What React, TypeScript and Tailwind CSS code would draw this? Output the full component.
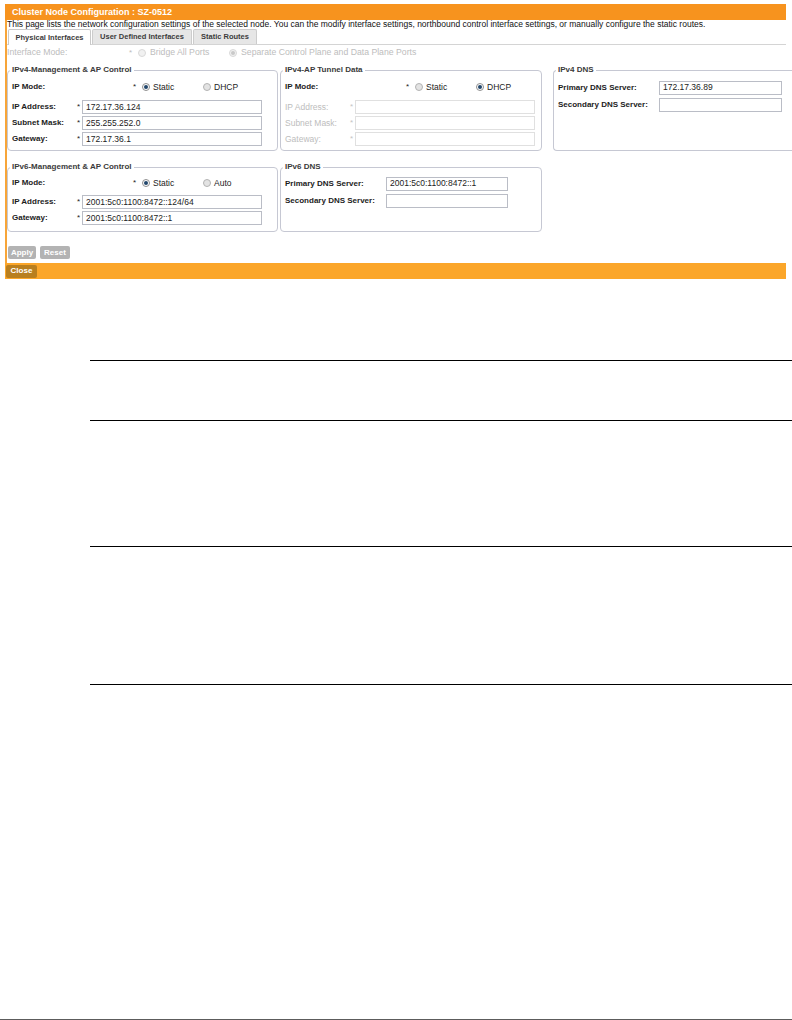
type RadioProps = { checked?: boolean; disabled?: boolean }

function Radio({ checked, disabled }: RadioProps) {
  const ring = disabled
    ? 'border-[#d9d9d9] bg-[#f1f1f1]'
    : checked
      ? 'border-[#8f8f8f] bg-white'
      : 'border-[#b3b3b3] bg-[#e3e3e3]'
  const dot = disabled ? 'bg-[#c9c9c9]' : 'bg-[#22466b]'
  return (
    <span className={`flex h-[8px] w-[8px] shrink-0 items-center justify-center rounded-full border ${ring}`}>
      {checked && <span className={`h-[4px] w-[4px] rounded-full ${dot}`} />}
    </span>
  )
}

function Field({ value, disabled, width }: { value?: string; disabled?: boolean; width: string }) {
  return (
    <div
      className={`flex h-[14px] items-center whitespace-nowrap border bg-white pl-[3px] text-[8.5px] leading-none text-[#222] ${width} ${
        disabled ? 'border-[#e0e0e0]' : 'border-[#babdc6]'
      }`}
    >
      {value}
    </div>
  )
}

// legend sits on the top border, like a fieldset
function Box({ title, className, children }: { title: string; className: string; children: React.ReactNode }) {
  return (
    <div className={`shrink-0 rounded-[4px] border border-[#c6c8d3] pl-[4px] ${className}`}>
      <div className="-mt-[6px] -ml-[2px] h-[10px] w-fit whitespace-nowrap bg-white px-[2px] text-[8px] font-bold leading-[10px] text-[#3a3a3a]">
        {title}
      </div>
      {children}
    </div>
  )
}

function ModeRow({ a, b, second }: { a: string; b: string; second?: boolean }) {
  return (
    <div className="flex h-[16px] items-center whitespace-nowrap">
      <span className="w-[121px] text-[8px] font-bold">IP Mode:</span>
      <span className="w-[9px] text-[8px]">*</span>
      <span className="flex w-[61px] items-center gap-[3px] text-[8.5px]">
        <Radio checked={!second} />
        {a}
      </span>
      <span className="flex items-center gap-[3px] text-[8.5px]">
        <Radio checked={second} />
        {b}
      </span>
    </div>
  )
}

function InputRow({ label, value, disabled }: { label: string; value?: string; disabled?: boolean }) {
  return (
    <div className="flex h-[16px] items-center whitespace-nowrap">
      <span className={`w-[65px] ${disabled ? 'text-[8.5px] text-[#bdbdbd]' : 'text-[8px] font-bold'}`}>{label}</span>
      <span className={`w-[5px] text-[8px] ${disabled ? 'text-[#c4c4c4]' : ''}`}>*</span>
      <Field value={value} disabled={disabled} width="w-[180px]" />
    </div>
  )
}

function DnsRow({ label, value, labelW, inputW }: { label: string; value?: string; labelW: string; inputW: string }) {
  return (
    <div className="flex h-[17px] items-center whitespace-nowrap">
      <span className={`text-[8px] font-bold ${labelW}`}>{label}</span>
      <Field value={value} width={inputW} />
    </div>
  )
}

export default function App() {
  return (
    <div className="flex h-[1020px] w-[792px] flex-col overflow-hidden bg-white font-['Liberation_Sans',Arial,sans-serif] text-[#1c1c1c]">
      <div className="pt-[4px]">
        <div className="ml-[5px] w-[781px]">
          <div className="flex h-[16px] items-center bg-[#f7931e] pl-[7px] text-[9px] font-bold leading-none text-white">
            Cluster Node Configuration : SZ-0512
          </div>

          <div className="border-l-2 border-[#f7a539] pb-[4px]">
            <p className="h-[9px] whitespace-nowrap text-[8.5px] leading-[9px] text-[#111]">
              This page lists the network configuration settings of the selected node. You can the modify interface settings, northbound control interface settings, or manually configure the static routes.
            </p>

            {/* tabs */}
            <div className="flex h-[16px] items-end gap-[1px] whitespace-nowrap border-b border-[#d4d4d4] pl-[1px] text-[7.5px] font-bold text-[#3b3b3b]">
              <div className="-mb-px flex h-[16px] w-[83px] items-center justify-center rounded-t-[2px] border border-b-0 border-[#c9c9c9] bg-white">
                Physical Interfaces
              </div>
              <div className="flex h-[15px] w-[100px] items-center justify-center rounded-t-[2px] border border-b-0 border-[#cccccc] bg-[#e6e6e6]">
                User Defined Interfaces
              </div>
              <div className="flex h-[15px] w-[64px] items-center justify-center rounded-t-[2px] border border-b-0 border-[#cccccc] bg-[#e6e6e6]">
                Static Routes
              </div>
            </div>

            <div className="flex h-[16px] items-center whitespace-nowrap text-[8.7px] text-[#bdbdbd]">
              <span className="w-[122px]">Interface Mode:</span>
              <span className="w-[9px] text-[8px]">*</span>
              <span className="flex w-[91px] items-center gap-[4px]">
                <Radio disabled />
                Bridge All Ports
              </span>
              <span className="flex items-center gap-[4px]">
                <Radio disabled checked />
                Separate Control Plane and Data Plane Ports
              </span>
            </div>

            <div className="mt-[9px] flex">
              <Box title="IPv4-Management & AP Control" className="w-[271px] pb-[3px]">
                <div className="mt-[4px]">
                  <ModeRow a="Static" b="DHCP" />
                </div>
                <div className="mt-[4px]">
                  <InputRow label="IP Address:" value="172.17.36.124" />
                  <InputRow label="Subnet Mask:" value="255.255.252.0" />
                  <InputRow label="Gateway:" value="172.17.36.1" />
                </div>
              </Box>
              <Box title="IPv4-AP Tunnel Data" className="ml-[2px] w-[262px] pb-[3px]">
                <div className="mt-[4px]">
                  <ModeRow a="Static" b="DHCP" second />
                </div>
                <div className="mt-[4px]">
                  <InputRow label="IP Address:" disabled />
                  <InputRow label="Subnet Mask:" disabled />
                  <InputRow label="Gateway:" disabled />
                </div>
              </Box>
              {/* runs off the right edge of the page */}
              <Box title="IPv4 DNS" className="ml-[11px] w-[252px] rounded-r-none border-r-0">
                <div className="mt-[4px]">
                  <DnsRow label="Primary DNS Server:" value="172.17.36.89" labelW="w-[101px]" inputW="w-[123px]" />
                  <DnsRow label="Secondary DNS Server:" labelW="w-[101px]" inputW="w-[123px]" />
                </div>
              </Box>
            </div>

            <div className="mt-[16px] flex">
              <Box title="IPv6-Management & AP Control" className="w-[271px] pb-[5px]">
                <div className="mt-[3px]">
                  <ModeRow a="Static" b="Auto" />
                </div>
                <div className="mt-[3px]">
                  <InputRow label="IP Address:" value="2001:5c0:1100:8472::124/64" />
                  <InputRow label="Gateway:" value="2001:5c0:1100:8472::1" />
                </div>
              </Box>
              <Box title="IPv6 DNS" className="ml-[2px] w-[262px]">
                <div className="mt-[3px]">
                  <DnsRow label="Primary DNS Server:" value="2001:5c0:1100:8472::1" labelW="w-[101px]" inputW="w-[122px]" />
                  <DnsRow label="Secondary DNS Server:" labelW="w-[101px]" inputW="w-[122px]" />
                </div>
              </Box>
            </div>

            <div className="mt-[14px] flex gap-[4px] pl-[1px] text-[8px] font-bold text-white">
              <button className="flex h-[13px] w-[28px] items-center justify-center rounded-[2px] bg-[#b3b3b3]">Apply</button>
              <button className="flex h-[13px] w-[30px] items-center justify-center rounded-[2px] bg-[#b3b3b3]">Reset</button>
            </div>
          </div>

          <div className="flex h-[16px] items-center bg-[#fba62a] pl-[1px]">
            <button className="flex h-[13px] w-[31px] items-center justify-center rounded-[2px] bg-[#b97f1f] text-[8px] font-bold text-white">
              Close
            </button>
          </div>
        </div>
      </div>

      {/* empty table rules from the page below */}
      <div className="mt-[81px] ml-[90px] w-[702px]">
        <div className="h-[60px] border-t border-black" />
        <div className="h-[126px] border-t border-black" />
        <div className="h-[138px] border-t border-black" />
        <div className="border-t border-black" />
      </div>

      <div className="flex-1" />
      <div className="h-px bg-[#5c5c5c]" />
    </div>
  )
}
